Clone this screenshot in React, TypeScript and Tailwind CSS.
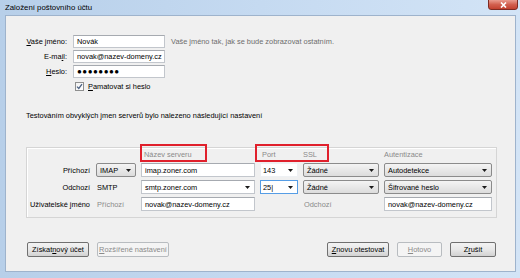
import React from "react";

function Arrow() {
  return (
    <svg width="5" height="3" viewBox="0 0 5 3" className="shrink-0">
      <polygon points="0,0 5,0 2.5,3" fill="#1a1a1a" />
    </svg>
  );
}

function Input({ children, className = "" }: { children?: React.ReactNode; className?: string }) {
  return (
    <div className={`h-full bg-white border border-[#c2c6cc] border-t-[#a6aab0] flex items-center pl-[3px] whitespace-nowrap overflow-hidden ${className}`}>
      {children}
    </div>
  );
}

function Combo({ children, className = "" }: { children?: React.ReactNode; className?: string }) {
  return (
    <div className={`h-full bg-white border flex items-center justify-between pl-[2px] pr-[4px] whitespace-nowrap ${className}`}>
      <span>{children}</span>
      <Arrow />
    </div>
  );
}

function Select({ children }: { children?: React.ReactNode }) {
  return (
    <div className="h-full rounded-[2px] border border-[#8b8b8b] bg-gradient-to-b from-[#f4f4f4] to-[#dcdcdc] flex items-center justify-between pl-[3px] pr-[4px] whitespace-nowrap">
      <span>{children}</span>
      <Arrow />
    </div>
  );
}

function Btn({ children, disabled = false, className = "" }: { children?: React.ReactNode; disabled?: boolean; className?: string }) {
  return (
    <div
      className={`h-[15px] rounded-[2px] border flex items-center justify-center whitespace-nowrap ${
        disabled
          ? "border-[#b8bcc0] bg-[#f4f4f4] text-[#8a8a8a]"
          : "border-[#707070] bg-gradient-to-b from-[#f3f3f3] via-[#e8e8e8] to-[#d2d2d2] text-black"
      } ${className}`}
    >
      {children}
    </div>
  );
}

export default function App() {
  return (
    <div className="w-[520px] h-[278px] relative flex flex-col overflow-hidden bg-gradient-to-r from-[#b7cfe9] via-[#c5daf1] to-[#d3e4f6] font-['Liberation_Sans',sans-serif] text-[7.4px] leading-[9px] text-black">
      {/* title bar */}
      <div className="h-[15px] shrink-0 flex items-start pt-[3px] pl-[5px] text-[7.8px]">
        <span>Založení poštovního účtu</span>
      </div>
      {/* close button */}
      <div className="absolute left-[488px] top-[-1px] w-[30px] h-[11px] rounded-b-[3px] border border-[#7d2b22] bg-gradient-to-b from-[#e99c8f] via-[#d2604f] to-[#c2412f] flex items-center justify-center">
        <svg width="7" height="6" viewBox="0 0 7 6">
          <path d="M1 0.5 L6 5.5 M6 0.5 L1 5.5" stroke="#ffffff" strokeWidth="1.6" />
        </svg>
      </div>

      {/* client area */}
      <div className="flex-1 ml-[5px] mr-[4px] mb-[6px] border border-[#9eb3cc] bg-[#f0f0f0] flex flex-col">
        {/* personal form */}
        <div className="mt-[19px] grid grid-cols-[61px_92px_auto] gap-x-[6px] gap-y-[2px] auto-rows-[13px] items-center">
          <div className="text-right"><span className="underline">V</span>aše jméno:</div>
          <Input>Novák</Input>
          <div className="text-[#6d6d6d] whitespace-nowrap">Vaše jméno tak, jak se bude zobrazovat ostatním.</div>

          <div className="text-right">E-ma<span className="underline">i</span>l:</div>
          <Input>novak@nazev-domeny.cz</Input>
          <div />

          <div className="text-right"><span className="underline">H</span>eslo:</div>
          <Input><span className="tracking-[0.5px] text-[8px]">●●●●●●●●</span></Input>
          <div />

          <div />
          <div className="flex items-center gap-[4px] pl-[2px]">
            <div className="w-[9px] h-[9px] border border-[#8e8f8f] bg-gradient-to-br from-[#f2f2f2] to-[#ffffff] flex items-center justify-center">
              <svg width="7" height="7" viewBox="0 0 7 7">
                <path d="M1 3.6 L2.8 5.5 L6 1.2" stroke="#4b6183" strokeWidth="1.3" fill="none" />
              </svg>
            </div>
            <span className="whitespace-nowrap"><span className="underline">P</span>amatovat si heslo</span>
          </div>
          <div />
        </div>

        <div className="mt-[18px] ml-[20px] h-[9px] whitespace-nowrap">
          Testováním obvyklých jmen serverů bylo nalezeno následující nastavení
        </div>

        {/* server group */}
        <div className="mt-[27px] ml-[20px] w-[471px] border border-[#d5d5d5] shadow-[inset_1px_1px_0_#ffffff] pb-[6px]">
          <div className="grid grid-cols-[64px_40px_114px_38px_76px_108px] gap-x-[5px] gap-y-[3px] grid-rows-[12px_14px_14px_14px] items-center">
            <div />
            <div />
            <div className="pl-[3px] text-[#8a8a8a]">Název serveru</div>
            <div className="pl-[2px] text-[#8a8a8a]">Port</div>
            <div className="pl-[0px] text-[#8a8a8a]">SSL</div>
            <div className="pl-[0px] text-[#8a8a8a]">Autentizace</div>

            <div className="text-right pr-[1px]">Příchozí</div>
            <Select>IMAP</Select>
            <Input className="pl-[3px]">imap.zoner.com</Input>
            <Combo className="border-[#eef1f4]">143</Combo>
            <Select>Žádné</Select>
            <Select>Autodetekce</Select>

            <div className="text-right pr-[1px]">Odchozí</div>
            <div className="pl-[1px]">SMTP</div>
            <Combo className="border-[#c2c6cc] border-t-[#a6aab0] pl-[3px]">smtp.zoner.com</Combo>
            <Combo className="border-[#569de5]">25|</Combo>
            <Select>Žádné</Select>
            <Select>Šifrované heslo</Select>

            <div className="text-right pr-[1px] whitespace-nowrap">Uživatelské jméno</div>
            <div className="pl-[1px] text-[#8a8a8a]">Příchozí</div>
            <Input className="pl-[3px]">novak@nazev-domeny.cz</Input>
            <div />
            <div className="pl-[1px] text-[#8a8a8a]">Odchozí</div>
            <Input>novak@nazev-domeny.cz</Input>
          </div>
        </div>

        {/* buttons */}
        <div className="mt-[24px] pl-[21px] pr-[19px] flex items-center">
          <Btn className="w-[62px]">Získat <span className="underline">n</span>ový účet</Btn>
          <Btn disabled className="w-[72px] ml-[8px]"><span className="underline">R</span>ozšířené nastavení</Btn>
          <div className="flex-1" />
          <Btn className="w-[62px]"><span className="underline">Z</span>novu otestovat</Btn>
          <Btn disabled className="w-[45px] ml-[8px]"><span className="underline">H</span>otovo</Btn>
          <Btn className="w-[46px] ml-[8px]">Z<span className="underline">r</span>ušit</Btn>
        </div>
      </div>

      {/* red annotation boxes */}
      <div className="absolute left-[140px] top-[144px] w-[67px] h-[18px] border-2 border-[#e0202c]" />
      <div className="absolute left-[255px] top-[144px] w-[74px] h-[18px] border-2 border-[#e0202c]" />
    </div>
  );
}
